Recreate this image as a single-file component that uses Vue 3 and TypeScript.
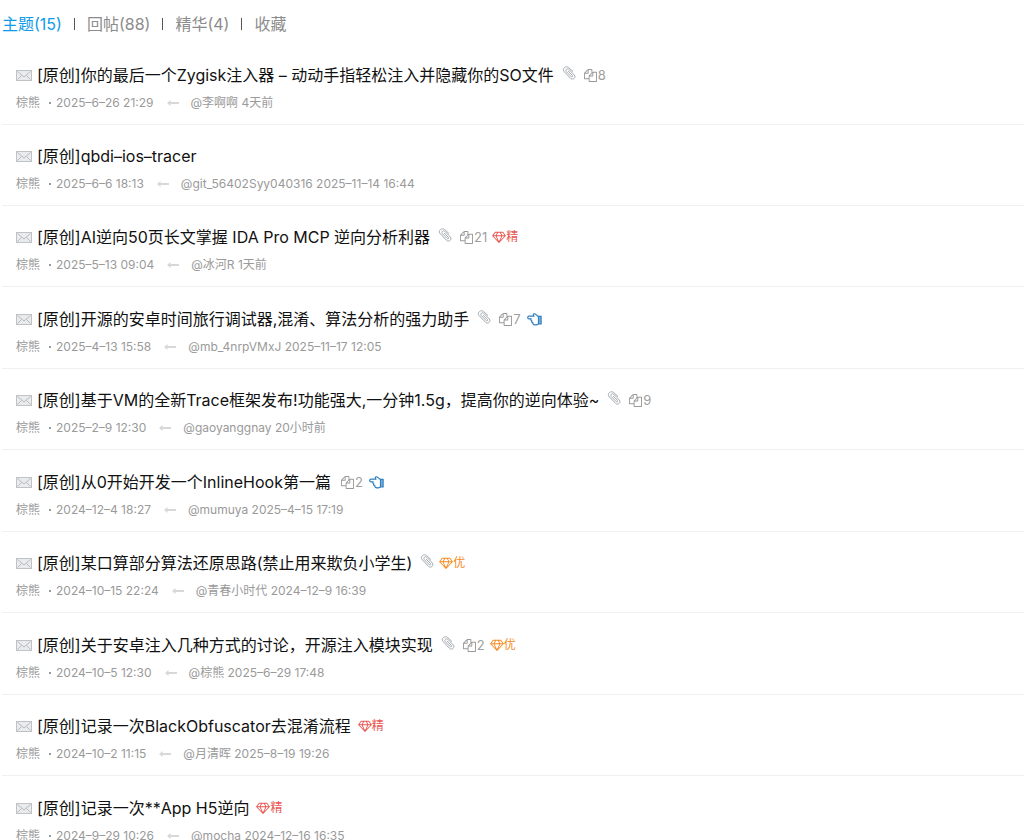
<script setup lang="ts">
interface Tab {
  label: string
  active?: boolean
}

interface Thread {
  title: string
  posted: string
  replier: string
  replied: string
  attachment?: boolean
  copies?: number
  liked?: boolean
  grade?: '精' | '优'
}

const tabs: Tab[] = [
  { label: '主题(15)', active: true },
  { label: '回帖(88)' },
  { label: '精华(4)' },
  { label: '收藏' },
]

const author = '棕熊'

const threads: Thread[] = [
  { title: '[原创]你的最后一个Zygisk注入器 – 动动手指轻松注入并隐藏你的SO文件', posted: '2025–6–26 21:29', replier: '李啊啊', replied: '4天前', attachment: true, copies: 8 },
  { title: '[原创]qbdi–ios–tracer', posted: '2025–6–6 18:13', replier: 'git_56402Syy040316', replied: '2025–11–14 16:44' },
  { title: '[原创]AI逆向50页长文掌握 IDA Pro MCP 逆向分析利器', posted: '2025–5–13 09:04', replier: '冰河R', replied: '1天前', attachment: true, copies: 21, grade: '精' },
  { title: '[原创]开源的安卓时间旅行调试器,混淆、算法分析的强力助手', posted: '2025–4–13 15:58', replier: 'mb_4nrpVMxJ', replied: '2025–11–17 12:05', attachment: true, copies: 7, liked: true },
  { title: '[原创]基于VM的全新Trace框架发布!功能强大,一分钟1.5g，提高你的逆向体验~', posted: '2025–2–9 12:30', replier: 'gaoyanggnay', replied: '20小时前', attachment: true, copies: 9 },
  { title: '[原创]从0开始开发一个InlineHook第一篇', posted: '2024–12–4 18:27', replier: 'mumuya', replied: '2025–4–15 17:19', copies: 2, liked: true },
  { title: '[原创]某口算部分算法还原思路(禁止用来欺负小学生)', posted: '2024–10–15 22:24', replier: '青春小时代', replied: '2024–12–9 16:39', attachment: true, grade: '优' },
  { title: '[原创]关于安卓注入几种方式的讨论，开源注入模块实现', posted: '2024–10–5 12:30', replier: '棕熊', replied: '2025–6–29 17:48', attachment: true, copies: 2, grade: '优' },
  { title: '[原创]记录一次BlackObfuscator去混淆流程', posted: '2024–10–2 11:15', replier: '月清晖', replied: '2025–8–19 19:26', grade: '精' },
  { title: '[原创]记录一次**App H5逆向', posted: '2024–9–29 10:26', replier: 'mocha', replied: '2024–12–16 16:35', grade: '精' },
]
</script>

<template>
  <main class="page">
    <nav class="tabs">
      <a v-for="tab in tabs" :key="tab.label" href="#" class="tab" :class="{ active: tab.active }">{{ tab.label }}</a>
    </nav>

    <ul class="threads">
      <li v-for="thread in threads" :key="thread.title" class="thread">
        <div class="headline">
          <svg class="mail" viewBox="0 0 16 11" aria-hidden="true">
            <rect x=".5" y=".5" width="15" height="10" fill="#e9ebec" stroke="#bfc2c4" />
            <path d="M1.5 1.5 8 7l6.500-5.500M1.500 9.500 5.500 5.500M14.500 9.500l-4-4" fill="none" stroke="#b8bcbe" />
          </svg>
          <a href="#" class="title">{{ thread.title }}</a>
          <svg v-if="thread.attachment" class="clip" viewBox="0 0 14 14" aria-hidden="true">
            <path d="M11 5.600 6.600 1.500C4-.700-.200 2.500 1.900 5.300l6.600 7c2.400 2.300 5.900-.800 3.800-3.300L6.800 3.300C5.100 1.800 2.900 3.900 4.300 5.600l4.900 5c.9.8 2-.2 1.200-1.200L6.100 5" />
          </svg>
          <span v-if="thread.copies" class="copies">
            <svg viewBox="0 0 1792 1792" aria-hidden="true">
              <path d="M1696 384q40 0 68 28t28 68v1216q0 40-28 68t-68 28h-960q-40 0-68-28t-28-68v-288h-544q-40 0-68-28t-28-68v-672q0-40 20-88t48-76l408-408q28-28 76-48t88-20h416q40 0 68 28t28 68v328q68-40 128-40h416zm-544 213l-299 299h299v-299zm-640-384l-299 299h299v-299zm196 647l316-316v-416h-384v416q0 40-28 68t-68 28h-416v640h512v-256q0-40 20-88t48-76zm956 804v-1152h-384v416q0 40-28 68t-68 28h-416v640h896z" />
            </svg>{{ thread.copies }}
          </span>
          <svg v-if="thread.liked" class="hand" viewBox="0 0 15 13" aria-hidden="true">
            <path d="M11.500 3.300C10 3.200 9.300 2 8.500 1.200 7.500.300 6.200.900 6.400 2l.4 1.200H2C.300 3.200.300 5.800 2 5.800h2c-.4.8 0 1.700.7 2-.2.900.3 1.700 1.100 1.900-.1 1.300.8 2.100 2.200 2.100h1.500l2-.8" />
            <path class="cuff" d="M11.500 3.300h2.600v7.700h-2.600z" />
          </svg>
          <span v-if="thread.grade" class="grade" :class="{ good: thread.grade === '优' }">
            <svg viewBox="0 0 2048 1792" aria-hidden="true">
              <path d="M212 768l623 665-300-665h-323zM1024 1549l349-781h-698zM538 640l204-384h-262l-288 384h346zM1213 1433l623-665h-323zM683 640h682l-204-384h-274zM1510 640h346l-288-384h-262zM1651 153l384 512q14 18 13 41.500t-17 40.500l-960 1024q-18 20-47 20t-47-20l-960-1024q-16-17-17-40.500t13-41.500l384-512q18-25 51-25h1152q33 0 51 25z" />
            </svg>{{ thread.grade }}
          </span>
        </div>
        <div class="meta">
          <a href="#">{{ author }}</a>
          <span class="date"><i class="dot"></i>{{ thread.posted }}</span>
          <svg class="arrow" viewBox="0 0 12 6" aria-hidden="true">
            <path d="M0 3 3.500 0v2H12v2H3.500v2z" />
          </svg>
          <a href="#">@{{ thread.replier }} {{ thread.replied }}</a>
        </div>
      </li>
    </ul>
  </main>
</template>

<style>
body {
  margin: 0;
  background: #fff;
}

html {
  scrollbar-width: none;
}
</style>

<style scoped>
.page {
  padding: 12px 0 0 2px;
  font-family: Inter, "Noto Sans CJK SC", sans-serif;
  font-size: 16px;
  font-weight: 400;
  color: #111;
}

a {
  color: inherit;
  text-decoration: none;
}

.tabs {
  display: flex;
  align-items: center;
  line-height: 24px;
  color: #8c8c8c;
}

.tab {
  display: flex;
  align-items: center;
}

.tab.active {
  color: #0f9bea;
}

.tab + .tab::before {
  content: "";
  width: 1px;
  height: 12px;
  margin: 0 12px;
  background: #555;
}

.threads {
  margin: 0;
  padding: 8px 0 0;
  list-style: none;
}

.thread {
  padding: 19px 14px 9px;
  border-bottom: 1px solid #f0f0f0;
}

.thread:nth-child(2n + 4) {
  padding-top: 20px;
}

.headline {
  display: flex;
  align-items: center;
  height: 24px;
  line-height: 24px;
  white-space: nowrap;
}

.mail {
  width: 16px;
  height: 11px;
  margin-right: 5px;
}

.title {
  margin-right: 2px;
}

.clip {
  width: 14px;
  height: 14px;
  margin: 0 0 4px 6px;
  fill: none;
  stroke: #a4aab0;
}

.copies,
.grade {
  display: flex;
  align-items: center;
  font-size: 13px;
}

.copies {
  margin-left: 8px;
  gap: 1px;
  color: #a0a0a0;
}

.copies svg {
  width: 13px;
  height: 13px;
  fill: #999;
}

.hand {
  width: 15px;
  height: 13px;
  margin-left: 6px;
  fill: none;
  stroke: #2f7fc1;
  stroke-width: 1.2;
}

.cuff {
  fill: #7fb2dc;
}

.grade {
  margin-left: 5px;
  font-size: 12px;
  color: #e85450;
}

.grade svg {
  width: 14px;
  height: 12px;
  fill: currentColor;
}

.grade.good {
  color: #f68a22;
}

.meta {
  display: flex;
  align-items: center;
  height: 24px;
  margin-top: 4px;
  font-size: 12px;
  line-height: 24px;
  color: #9a9a9a;
  white-space: nowrap;
}

.date {
  display: flex;
  align-items: center;
}

.dot {
  width: 2px;
  height: 2px;
  margin: 0 5px 0 9px;
  background: #999;
}

.arrow {
  width: 12px;
  height: 6px;
  margin: 0 12px 0 13px;
  fill: #d8d8d8;
}
</style>
